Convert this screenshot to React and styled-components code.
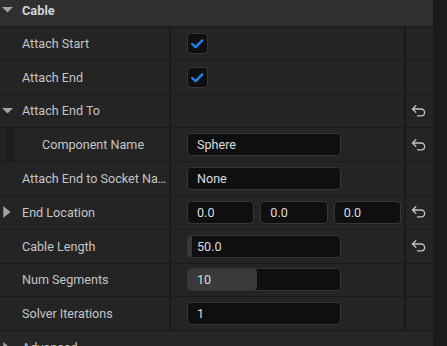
import React from "react";
import styled, { createGlobalStyle } from "styled-components";

const GlobalStyle = createGlobalStyle`
  html, body { margin: 0; padding: 0; background: #1a1a1a; }
  body { font-family: Roboto, "Noto Sans", "Liberation Sans", sans-serif; }
  #root { width: 447px; height: 346px; }
`;

const Root = styled.div`
  width: 447px;
  height: 346px;
  overflow: hidden;
  display: flex;
  background: #1a1a1a;
`;

const Panel = styled.div`
  width: 433px;
  display: flex;
  flex-direction: column;
  background: #242424;
`;

const Scrollbar = styled.div`
  flex: 1;
  background: #1b1b1b;
`;

const CategoryHeader = styled.div`
  height: 27px;
  flex: none;
  box-sizing: border-box;
  border-bottom: 1px solid #1a1a1a;
  background: #2f2f2f;
  display: flex;
  align-items: center;
  padding-bottom: 6px;
  color: #d4d4d4;
  font-size: 12.8px;
  font-weight: 700;
`;

const Row = styled.div`
  height: 33.8px;
  flex: none;
  box-sizing: border-box;
  border-bottom: 1px solid #1a1a1a;
  display: flex;
  background: ${(p) => p.$bg || "#242424"};
`;

const NameCell = styled.div`
  width: 171px;
  flex: none;
  box-sizing: border-box;
  border-right: 2px solid #1a1a1a;
  display: flex;
  align-items: center;
  min-width: 0;
`;

const FullCell = styled.div`
  flex: 1;
  display: flex;
  align-items: center;
  min-width: 0;
`;

const ValueCell = styled.div`
  width: 235px;
  flex: none;
  box-sizing: border-box;
  border-right: 2px solid #1a1a1a;
  display: flex;
  align-items: center;
  gap: 6px;
  padding: 0 3px 0 16px;
`;

const ResetCell = styled.div`
  flex: 1;
  display: flex;
  align-items: center;
  justify-content: center;
  padding-right: 1px;
`;

const ExpanderSlot = styled.div`
  width: ${(p) => p.$w || 22}px;
  flex: none;
  box-sizing: border-box;
  padding-left: ${(p) => p.$pl ?? 2}px;
  display: flex;
  align-items: center;
`;

const IndentGap = styled.div`
  width: 7px;
  align-self: stretch;
  flex: none;
  box-sizing: border-box;
  border-right: 1px solid #1a1a1a;
`;

const IndentBar = styled.div`
  width: 7px;
  align-self: stretch;
  flex: none;
  background: #1e1e1e;
`;

const Label = styled.div`
  flex: 1;
  min-width: 0;
  white-space: nowrap;
  overflow: hidden;
  text-overflow: ellipsis;
  padding-right: 1px;
  color: #c4c4c4;
  font-size: 12.6px;
`;

const CheckBox = styled.div`
  width: 21px;
  height: 21px;
  box-sizing: border-box;
  border: 1px solid #363636;
  border-radius: 4px;
  background: #0f0f0f;
  display: flex;
  align-items: center;
  justify-content: center;
`;

const TextBox = styled.div`
  position: relative;
  width: ${(p) => (p.$grow ? "auto" : "154px")};
  flex: ${(p) => (p.$grow ? "1" : "none")};
  height: 23px;
  box-sizing: border-box;
  border: 1px solid #363636;
  border-radius: 4px;
  background: #0f0f0f;
  display: flex;
  align-items: center;
  padding-left: 9px;
  overflow: hidden;
`;

const Fill = styled.div`
  position: absolute;
  left: 0;
  top: 0;
  bottom: 0;
  background: #3a3a3a;
  border-radius: 3px;
`;

const BoxText = styled.span`
  position: relative;
  color: #dcdcdc;
  font-size: 12.6px;
  white-space: nowrap;
`;

const DownTri = () => (
  <svg width="11" height="6" viewBox="0 0 11 6">
    <polygon points="0,0 11,0 5.5,5.6" fill="#a3a3a3" />
  </svg>
);

const RightTri = () => (
  <svg width="8" height="12" viewBox="0 0 8 12">
    <polygon points="0.3,0 7.5,6 0.3,12" fill="#a3a3a3" />
  </svg>
);

const Check = () => (
  <svg width="19" height="19" viewBox="0 0 19 19">
    <path d="M4.2 10 L7.6 13.2 L14.3 6.4" fill="none" stroke="#2183ea" strokeWidth="2.4" strokeLinecap="round" strokeLinejoin="round" />
  </svg>
);

const ResetIcon = () => (
  <svg width="16" height="12" viewBox="0 0 16 12">
    <path
      d="M4.8 0.8 L1.4 4 L4.8 7.2 M1.4 4 H10.2 A3.4 3.4 0 0 1 10.2 10.8 H6.4"
      fill="none"
      stroke="#c2c2c2"
      strokeWidth="1.3"
      strokeLinecap="round"
      strokeLinejoin="round"
    />
  </svg>
);

const Prop = ({ label, expander, indent, reset, children }) => (
  <Row>
    <NameCell>
      {indent ? (
        <>
          <IndentGap />
          <IndentBar />
          <ExpanderSlot $w={28} />
        </>
      ) : (
        <ExpanderSlot $pl={expander === "right" ? 3 : 2}>
          {expander === "down" && <DownTri />}
          {expander === "right" && <RightTri />}
        </ExpanderSlot>
      )}
      <Label>{label}</Label>
    </NameCell>
    <ValueCell>{children}</ValueCell>
    <ResetCell>{reset && <ResetIcon />}</ResetCell>
  </Row>
);

const Input = ({ value, fill, grow }) => (
  <TextBox $grow={grow}>
    {fill != null && <Fill style={{ width: fill }} />}
    <BoxText>{value}</BoxText>
  </TextBox>
);

export default function App() {
  return (
    <Root>
      <GlobalStyle />
      <Panel>
        <CategoryHeader>
          <ExpanderSlot>
            <DownTri />
          </ExpanderSlot>
          Cable
        </CategoryHeader>
        <Prop label="Attach Start">
          <CheckBox>
            <Check />
          </CheckBox>
        </Prop>
        <Prop label="Attach End">
          <CheckBox>
            <Check />
          </CheckBox>
        </Prop>
        <Prop label="Attach End To" expander="down" reset />
        <Prop label="Component Name" indent reset>
          <Input value="Sphere" />
        </Prop>
        <Prop label="Attach End to Socket Name">
          <Input value="None" />
        </Prop>
        <Prop label="End Location" expander="right" reset>
          <Input value="0.0" grow />
          <Input value="0.0" grow />
          <Input value="0.0" grow />
        </Prop>
        <Prop label="Cable Length" reset>
          <Input value="50.0" fill={4} />
        </Prop>
        <Prop label="Num Segments">
          <Input value="10" fill={69} />
        </Prop>
        <Prop label="Solver Iterations">
          <Input value="1" />
        </Prop>
        <Row $bg="#262626">
          <FullCell>
            <ExpanderSlot $pl={3}>
              <RightTri />
            </ExpanderSlot>
            <Label>Advanced</Label>
          </FullCell>
        </Row>
      </Panel>
      <Scrollbar />
    </Root>
  );
}
